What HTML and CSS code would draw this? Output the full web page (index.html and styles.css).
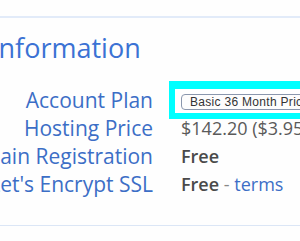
FILE: index.html
```html
<!DOCTYPE html>
<html>
<head>
<meta charset="utf-8">
<link rel="stylesheet" href="styles.css">
</head>
<body>
<div class="panel">
  <div class="rule-top"></div>
  <h2 class="heading">Information</h2>
  <div class="rows">
    <div class="label">Account Plan</div>
    <div class="value">
      <div class="focus-ring">
        <div class="select">Basic 36 Month Price - $3.95/mo</div>
      </div>
    </div>
    <div class="label">Hosting Price</div>
    <div class="value">$142.20 ($3.95/mo)</div>
    <div class="label">Domain Registration</div>
    <div class="value strong">Free</div>
    <div class="label">Let's Encrypt SSL</div>
    <div class="value"><span class="strong">Free</span> <span class="dash">-</span> <a class="link" href="#">terms</a></div>
  </div>
  <div class="rule-bottom"></div>
</div>
</body>
</html>
```
FILE: styles.css
```css
html, body {
  margin: 0;
  padding: 0;
  background: #fefefe;
  overflow: hidden;
}
.panel {
  width: 300px;
  height: 241px;
  overflow: hidden;
  font-family: "Open Sans", sans-serif;
}
.rule-top {
  margin-top: 16px;
  height: 2px;
  background: #e2ebf9;
}
.heading {
  margin: 11px 0 0 -9px;
  font-weight: 400;
  font-size: 27px;
  line-height: 38px;
  color: #3b72d4;
  white-space: nowrap;
}
.rows {
  margin-top: 19px;
  display: grid;
  grid-template-columns: 153px 1fr;
  grid-auto-rows: 28px;
  column-gap: 28px;
  align-items: center;
}
.label {
  display: flex;
  justify-content: flex-end;
  white-space: nowrap;
  font-size: 21px;
  line-height: 28px;
  color: #3c6ec6;
}
.value {
  white-space: nowrap;
  font-size: 18px;
  line-height: 28px;
  color: #5a5a5a;
  overflow: visible;
}
.strong {
  font-weight: 600;
  color: #4a4a4a;
}
.dash {
  color: #888;
}
.link {
  color: #3c6ec6;
  text-decoration: none;
}
.focus-ring {
  margin-left: -12px;
  border-top: 8px solid #00ffff;
  border-left: 6px solid #00ffff;
  border-bottom: 6px solid #00ffff;
  padding: 5px 0 3px 6px;
  background: #fff;
  width: 200px;
}
.select {
  height: 14px;
  border: 1px solid #8a97ad;
  border-radius: 4px;
  padding: 0 0 0 8px;
  font-family: "Liberation Sans", sans-serif;
  font-size: 12px;
  letter-spacing: 0.3px;
  line-height: 14px;
  color: #333;
  background: #fdfdfd;
  white-space: nowrap;
  overflow: hidden;
}
.rule-bottom {
  margin-top: 27px;
  height: 1px;
  background: #dbe6f6;
}
```
